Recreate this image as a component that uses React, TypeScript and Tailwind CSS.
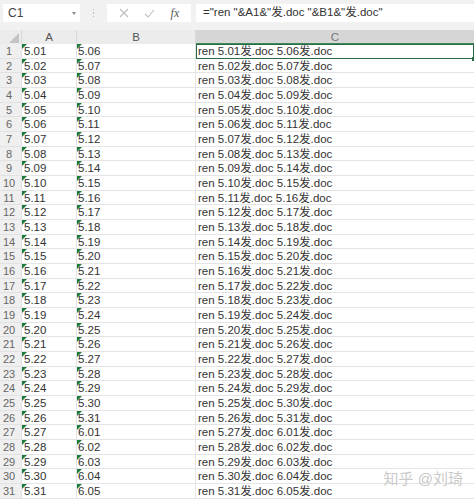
import React from 'react';

type Row = { n: number; a: string; b: string };

const pad = (v: number) => (v < 10 ? `0${v}` : `${v}`);

const rows: Row[] = Array.from({ length: 31 }, (_, i) => {
  const n = i + 1;
  const bi = n + 5;
  const b = bi <= 31 ? `5.${pad(bi)}` : `6.${pad(bi - 31)}`;
  return { n, a: `5.${pad(n)}`, b };
});

const Flag = () => (
  <span className="absolute left-0 top-0 h-0 w-0 border-r-[5px] border-t-[5px] border-r-transparent border-t-[#1d7a3e]" />
);

const App = () => {
  return (
    <div className="relative h-[499px] w-[474px] overflow-hidden bg-white font-['Liberation_Sans','Noto_Sans_CJK_SC',sans-serif] text-[#333]">
      {/* formula bar */}
      <div className="flex h-[30px] items-start bg-[#f1f1f1] pt-[4px]">
        <div className="ml-[3px] flex h-[18px] w-[77px] items-center justify-between bg-white pl-[5px] pr-[4px] text-[12px] text-[#444]">
          <span>C1</span>
          <span className="h-0 w-0 border-x-[2.5px] border-t-[3px] border-x-transparent border-t-[#888]" />
        </div>
        <div className="flex h-[18px] w-[27px] flex-col items-center justify-center gap-[2px]">
          <span className="h-[1.5px] w-[1.5px] bg-[#bbb]" />
          <span className="h-[1.5px] w-[1.5px] bg-[#bbb]" />
          <span className="h-[1.5px] w-[1.5px] bg-[#bbb]" />
        </div>
        <div className="flex h-[18px] w-[84px] items-center justify-around bg-white px-[4px]">
          <svg width="10" height="10" viewBox="0 0 10 10" stroke="#bdbdbd" strokeWidth="1.1" fill="none">
            <path d="M1 1 L9 9 M9 1 L1 9" />
          </svg>
          <svg width="11" height="9" viewBox="0 0 11 9" stroke="#bdbdbd" strokeWidth="1.1" fill="none">
            <path d="M1 5 L4 8 L10 1" />
          </svg>
          <span className="font-['Liberation_Serif',serif] text-[12px] italic text-[#555]">fx</span>
        </div>
        <div className="ml-[5px] flex h-[18px] flex-1 items-center bg-white pl-[7px] text-[11.5px] text-[#333]">
          ="ren "&amp;A1&amp;"发.doc "&amp;B1&amp;"发.doc"
        </div>
      </div>

      {/* column headers */}
      <div className="flex h-[14px] bg-[#ececec] text-[11.5px] leading-[14px] text-[#555]">
        <div className="relative w-[22px] border-r border-[#d8d8d8]">
          <span className="absolute bottom-[1px] right-[2px] h-0 w-0 border-b-[10px] border-l-[10px] border-b-[#c4c4c4] border-l-transparent" />
        </div>
        <div className="w-[55px] border-r border-[#d8d8d8] text-center">A</div>
        <div className="w-[119px] border-r border-[#d8d8d8] text-center">B</div>
        <div className="flex-1 border-b-[1.5px] border-[#3d8a5c] bg-[#d6d6d6] text-center text-[#777]">C</div>
      </div>

      {/* grid */}
      <div className="flex flex-col text-[11.5px]">
        {rows.map((r) => (
          <div key={r.n} className="flex h-[14.68px] leading-[14px]">
            <div className="w-[22px] shrink-0 border-b border-r border-[#e2e2e2] bg-[#efefef] pr-[3px] text-center text-[11px] text-[#666]">
              {r.n}
            </div>
            <div className="relative w-[55px] shrink-0 border-b border-r border-[#e4e4e4] pl-[2px]">
              <Flag />
              {r.a}
            </div>
            <div className="relative w-[119px] shrink-0 border-b border-r border-[#e4e4e4] pl-[1px]">
              <Flag />
              {r.b}
            </div>
            <div
              className={
                r.n === 1
                  ? 'relative flex-1 border-[1.5px] border-[#2a6b45] pl-[1px] leading-[12px]'
                  : 'flex-1 border-b border-[#e4e4e4] pl-[2px]'
              }
            >
              ren {r.a}发.doc {r.b}发.doc
              {r.n === 1 && (
                <span className="absolute -bottom-[3px] -right-[3px] h-[4px] w-[4px] bg-[#2a6b45]" />
              )}
            </div>
          </div>
        ))}
      </div>

      <div className="absolute bottom-[12px] right-[11px] text-[15px] leading-[17px] text-[#c9c9c9]">
        知乎 @刘琦
      </div>
    </div>
  );
};

export default App;
